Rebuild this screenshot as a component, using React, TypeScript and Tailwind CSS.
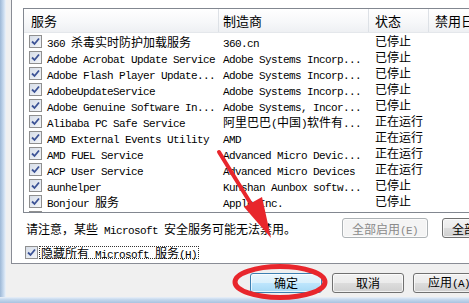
import React from "react";

const CJK_RE = /([\u3000-\u9fff\uff00-\uffef]+)/;

// SimSun-like mix: half-width latin 6px, CJK 12px
function Mixed({ text }: { text: string }) {
  const parts = text.split(CJK_RE).filter((p) => p !== "");
  return (
    <span className="whitespace-pre">
      {parts.map((p, i) =>
        CJK_RE.test(p) ? (
          <span key={i} className="font-['Noto_Sans_CJK_SC',sans-serif] text-[12px]">
            {p}
          </span>
        ) : (
          <span key={i} className="font-['Liberation_Mono',monospace] text-[11px] tracking-[-0.6px]">
            {p}
          </span>
        )
      )}
    </span>
  );
}

function Check() {
  return (
    <div className="w-[13px] h-[13px] shrink-0 border border-[#8f8f8f] bg-[linear-gradient(135deg,#d6dde8_0%,#f4f6f9_100%)] flex items-center justify-center">
      <svg width="9" height="9" viewBox="0 0 9 9">
        <path d="M1 4.5 L3.5 7 L8 1.5" fill="none" stroke="#3c5396" strokeWidth="1.8" />
      </svg>
    </div>
  );
}

const rows: [string, string, string][] = [
  ["360 杀毒实时防护加载服务", "360.cn", "已停止"],
  ["Adobe Acrobat Update Service", "Adobe Systems Incorp...", "已停止"],
  ["Adobe Flash Player Update...", "Adobe Systems Incorp...", "已停止"],
  ["AdobeUpdateService", "Adobe Systems Incorp...", "已停止"],
  ["Adobe Genuine Software In...", "Adobe Systems, Incor...", "已停止"],
  ["Alibaba PC Safe Service", "阿里巴巴(中国)软件有...", "正在运行"],
  ["AMD External Events Utility", "AMD", "正在运行"],
  ["AMD FUEL Service", "Advanced Micro Devic...", "正在运行"],
  ["ACP User Service", "Advanced Micro Devices", "正在运行"],
  ["aunhelper", "Kunshan Aunbox softw...", "已停止"],
  ["Bonjour 服务", "Apple Inc.", "已停止"],
];

function Button({
  children,
  kind = "normal",
  w = "w-[72px]",
}: {
  children: React.ReactNode;
  kind?: "normal" | "default" | "disabled";
  w?: string;
}) {
  const cls =
    kind === "default"
      ? "border-[#3c7fb1] bg-[linear-gradient(180deg,#eaf6fd_0%,#d9f0fc_50%,#bee6fd_50%,#a7d9f5_100%)] text-black"
      : kind === "disabled"
      ? "border-[#adb2b5] bg-[#f4f4f4] text-[#8a8a8a]"
      : "border-[#707070] bg-[linear-gradient(180deg,#f2f2f2_0%,#ebebeb_50%,#dddddd_50%,#cfcfcf_100%)] text-black";
  return (
    <div
      className={`${w} h-[20px] shrink-0 rounded-[3px] border ${cls} shadow-[inset_0_0_0_1px_rgba(255,255,255,0.7)] flex items-center justify-center leading-none`}
    >
      {children}
    </div>
  );
}

export default function App() {
  return (
    <div className="relative w-[469px] h-[303px] overflow-hidden bg-[#f0f0f0] flex flex-col font-['Noto_Sans_CJK_SC',sans-serif] text-black">
      <div className="flex flex-1 min-h-0">
        {/* window frame left */}
        <div className="w-[6px] shrink-0 bg-[linear-gradient(90deg,#9db8d6_0%,#c9dbef_60%,#eef3f9_100%)]" />
        <div className="flex flex-col flex-1 min-w-0">
          <div className="flex pl-[5px]">
            {/* tab page */}
            <div className="w-[600px] shrink-0 bg-white border-l border-b border-[#898c95] pl-[11px] pt-[8px] pb-[3px] flex flex-col">
              {/* list view */}
              <div className="w-[540px] h-[205px] border border-[#828790] overflow-hidden flex flex-col">
                <div className="h-[24px] shrink-0 flex bg-[linear-gradient(180deg,#ffffff_0%,#f6f7f9_60%,#eef0f3_100%)] border-b border-[#e4e7eb] text-[13px]">
                  <div className="w-[195px] shrink-0 border-r border-[#dde1e6] pl-[7px] flex items-center">服务</div>
                  <div className="w-[150px] shrink-0 border-r border-[#dde1e6] pl-[4px] flex items-center">制造商</div>
                  <div className="w-[60px] shrink-0 border-r border-[#dde1e6] pl-[6px] flex items-center">状态</div>
                  <div className="flex-1 pl-[6px] flex items-center">禁用日期</div>
                </div>
                {rows.map(([name, maker, status], i) => (
                  <div key={i} className="h-[16px] shrink-0 flex items-center leading-none">
                    <div className="w-[195px] shrink-0 pl-[5px] flex items-center gap-[5px]">
                      <Check />
                      <Mixed text={name} />
                    </div>
                    <div className="w-[150px] shrink-0 pl-[4px] flex items-center">
                      <Mixed text={maker} />
                    </div>
                    <div className="w-[60px] shrink-0 pl-[6px] text-[12px]">{status}</div>
                  </div>
                ))}
                <div className="h-[16px] shrink-0 flex items-center">
                  <div className="pl-[5px]">
                    <Check />
                  </div>
                </div>
              </div>

              {/* note + enable/disable all */}
              <div className="mt-[5px] h-[20px] flex items-center">
                <div className="w-[319px] shrink-0 pl-[3px] leading-none">
                  <Mixed text="请注意，某些 Microsoft 安全服务可能无法禁用。" />
                </div>
                <Button kind="disabled" w="w-[86px]">
                  <Mixed text="全部启用(E)" />
                </Button>
                <div className="w-[14px] shrink-0" />
                <Button w="w-[86px]">
                  <Mixed text="全部禁用(D)" />
                </Button>
              </div>

              {/* hide microsoft services */}
              <div className="mt-[6px] h-[16px] flex items-center pl-[2px]">
                <Check />
                <div className="ml-[1px] border border-dotted border-[#333] px-[1px] h-[13px] flex items-center leading-none">
                  <Mixed text="隐藏所有 Microsoft 服务(H)" />
                </div>
              </div>
            </div>
          </div>

          {/* bottom buttons */}
          <div className="h-[33px] shrink-0 flex items-start pt-[9px] pl-[244px] gap-[10px] text-[12px]">
            <Button kind="default">确定</Button>
            <Button>取消</Button>
            <div className="-ml-[1px]">
              <Button>
                <Mixed text="应用(A)" />
              </Button>
            </div>
          </div>
        </div>
      </div>
      {/* window frame bottom */}
      <div className="h-[6px] shrink-0 bg-[linear-gradient(180deg,#e9f0f8_0%,#c6d9ee_40%,#a9c3e0_100%)]" />

      {/* red annotations */}
      <svg className="absolute inset-0 pointer-events-none" width="469" height="303" viewBox="0 0 469 303">
        <line x1="219" y1="152" x2="256" y2="212" stroke="#e8262c" strokeWidth="4" strokeLinecap="round" />
        <polygon points="271,238 244,207 262,197" fill="#e8262c" />
        <ellipse cx="280" cy="282" rx="45" ry="15.5" fill="none" stroke="#e8262c" strokeWidth="5" />
      </svg>
    </div>
  );
}
